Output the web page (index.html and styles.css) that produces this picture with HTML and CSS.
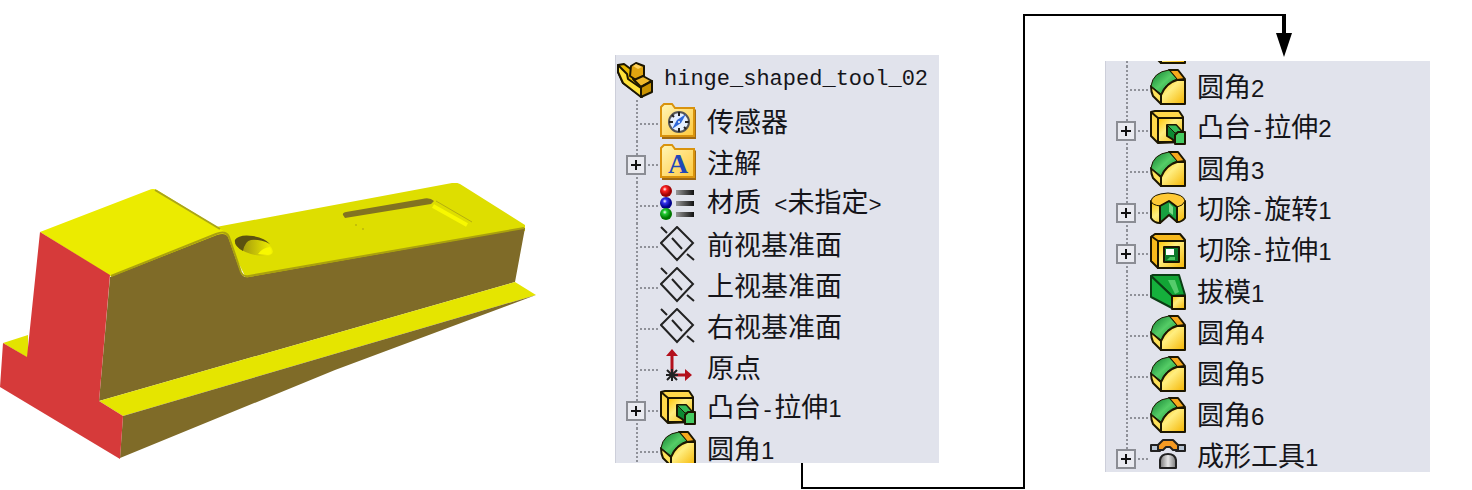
FILE: index.html
```html
<!DOCTYPE html>
<html lang="zh-CN">
<head>
    <meta charset="UTF-8">
    <meta name="viewport" content="width=device-width, initial-scale=1.0">
    <title>hinge_shaped_tool_02</title>
    <link rel="stylesheet" href="styles.css">
</head>
<body>

<svg class="defs" aria-hidden="true">
    <defs>
        <linearGradient id="gold" x1="0" y1="0" x2="1" y2="1">
            <stop offset="0" stop-color="#ffc400"/>
            <stop offset=".4" stop-color="#ffee80"/>
            <stop offset="1" stop-color="#f5b400"/>
        </linearGradient>
        <linearGradient id="leaf" x1="0" y1="0" x2="1" y2="1">
            <stop offset="0" stop-color="#0b7a2c"/>
            <stop offset=".5" stop-color="#55cc66"/>
            <stop offset="1" stop-color="#0d8a30"/>
        </linearGradient>
        <linearGradient id="folder" x1="0" y1="0" x2="1" y2="1">
            <stop offset="0" stop-color="#fff6b8"/>
            <stop offset="1" stop-color="#ffc93c"/>
        </linearGradient>
        <linearGradient id="steel">
            <stop offset="0" stop-color="#777"/>
            <stop offset=".5" stop-color="#e6e6e6"/>
            <stop offset="1" stop-color="#777"/>
        </linearGradient>
        <linearGradient id="bar">
            <stop offset="0" stop-color="#999"/>
            <stop offset="1" stop-color="#111"/>
        </linearGradient>
        <radialGradient id="red" cx=".4" cy=".35"><stop offset="0" stop-color="#fff"/><stop offset=".35" stop-color="#f22"/><stop offset="1" stop-color="#900"/></radialGradient>
        <radialGradient id="blue" cx=".4" cy=".35"><stop offset="0" stop-color="#fff"/><stop offset=".35" stop-color="#33e"/><stop offset="1" stop-color="#008"/></radialGradient>
        <radialGradient id="green" cx=".4" cy=".35"><stop offset="0" stop-color="#fff"/><stop offset=".35" stop-color="#2c3"/><stop offset="1" stop-color="#070"/></radialGradient>
    </defs>

    <symbol id="i-part" viewBox="0 0 36 36">
        <g stroke="#1c1600" stroke-width="2" stroke-linejoin="round">
            <path fill="#e8b800" d="M1 3l6-1 8 6 1 9 9 7v11L6 21 1 10z"/>
            <path fill="#ffe23a" d="M1 3l9 9 1 5 13 9v9L6 21 1 10z"/>
            <path fill="#e0a410" d="M14 4l5-3 8 3v10l-8 4-6-4z"/>
            <path fill="#f0b92a" d="M17 18l9-4 9 5-11 6z"/>
            <path fill="#c99200" d="M24 25l11-6v11l-11 5z"/>
        </g>
        <path fill="#ffd25e" d="M16 4l3-2 6 3-4 2z"/>
    </symbol>

    <symbol id="i-sensor" viewBox="0 0 36 36">
        <path d="M2 36V5h32l2 2v29z" fill="#a06a14"/>
        <path d="M1 33V4l3-3h8l3 4h19v28z" fill="url(#folder)" stroke="#d9930d" stroke-width="2"/>
        <circle cx="19" cy="19" r="10" fill="#e4efff" stroke="#555" stroke-width="2"/>
        <path d="M19 9v4M19 25v4M9 19h4M25 19h4M12 12l2 2M24 24l2 2" stroke="#222" stroke-width="2"/>
        <path d="M12 26l5-9 9-6-5 9z" fill="#2d67d8"/>
        <circle cx="19" cy="19" r="1" fill="#fff"/>
    </symbol>

    <symbol id="i-note" viewBox="0 0 36 36">
        <path d="M2 36V5h32l2 2v29z" fill="#a06a14"/>
        <path d="M1 33V4l3-3h8l3 4h19v28z" fill="url(#folder)" stroke="#d9930d" stroke-width="2"/>
    </symbol>

    <symbol id="i-material" viewBox="0 0 36 36">
        <circle cx="6" cy="6" r="6" fill="url(#red)"/>
        <circle cx="6" cy="18" r="6" fill="url(#blue)"/>
        <circle cx="6" cy="29" r="6" fill="url(#green)"/>
        <path fill="url(#bar)" d="M16 5h18v5H16zM16 16h18v5H16zM16 27h18v5H16z"/>
    </symbol>

    <symbol id="i-plane" viewBox="0 0 36 36">
        <g fill="none" stroke="#222" stroke-width="2">
            <path d="M17 1l16 16-16 17L1 17z"/>
            <path d="M1 1l6 6M12 12l10 11M27 28l7 6"/>
        </g>
    </symbol>

    <symbol id="i-origin" viewBox="0 0 36 36">
        <path d="M12 24V6M14 26h12" stroke="#b3101c" stroke-width="3"/>
        <path d="M6 7l6-7 6 7zM25 20l7 6-7 6z" fill="#b3101c"/>
        <path d="M12 20v12M6 26h12M7 21l10 10M17 21L7 31" stroke="#222" stroke-width="2"/>
    </symbol>

    <symbol id="i-boss" viewBox="0 0 36 36">
        <g stroke="#1c1600" stroke-width="2" stroke-linejoin="round">
            <path fill="#ffd84a" d="M1 2l4-1h24l4 6v25l-25 1-7-7z"/>
            <path fill="url(#gold)" d="M8 8h25v24H8z"/>
            <path fill="none" d="M1 2l7 6"/>
            <path fill="#0c8a32" d="M17 15h9l8 9-8 9-4-4-5-3z"/>
            <path fill="#35bb56" stroke-width="1" d="M17 15h9l7 8h-8z"/>
            <path fill="#45cc62" d="M25 25l3-3h7v12H25z"/>
        </g>
    </symbol>

    <symbol id="i-fillet" viewBox="0 0 36 36">
        <g stroke="#1c1600" stroke-width="2" stroke-linejoin="round">
            <path fill="#f7a91c" d="M19 1h9l7 9-8 1z"/>
            <path fill="#ffe25a" d="M1 17l10 9v9L3 27q-2-4-2-10z"/>
            <path fill="url(#gold)" d="M11 35V26q5-12 16-15h8v24z"/>
            <path fill="url(#leaf)" stroke-width="1" d="M1 17Q3 3 19 1l8 9q-12 4-16 15z"/>
        </g>
    </symbol>

    <symbol id="i-revolve" viewBox="0 0 36 36">
        <g stroke="#1c1600" stroke-width="2" stroke-linejoin="round">
            <path fill="url(#gold)" d="M1 9v17q3 5 9 5V13zM35 9v17q-3 4-8 4V14z"/>
            <path fill="#ffc935" stroke-width="1" d="M1 9q1-7 17-8 16 1 17 8-2 5-8 6L19 9l-9 5Q2 13 1 9z"/>
            <path fill="#18a040" d="M10 14l9-5 8 6v15l-8-7-9 8z"/>
            <path fill="#7ddb88" stroke="none" d="M19 11l4 4v8l-4-3z"/>
        </g>
    </symbol>

    <symbol id="i-cut" viewBox="0 0 36 36">
        <g stroke="#1c1600" stroke-width="2" stroke-linejoin="round">
            <path fill="#f7b91c" d="M1 4l4-3h25l5 6v28H8l-7-7z"/>
            <path fill="url(#gold)" d="M8 8h27v27H8z"/>
            <path fill="none" d="M1 3l7 5"/>
            <path fill="#0c7a2c" d="M14 14h15v15H14z"/>
            <path fill="#fff" stroke="none" d="M16 16h8v6h-8z"/>
            <path fill="#4bc862" stroke="none" d="M17 27l3-3h5v3z"/>
        </g>
    </symbol>

    <symbol id="i-draft" viewBox="0 0 36 36">
        <g stroke="#0b3d14" stroke-width="2" stroke-linejoin="round">
            <path fill="#12a535" d="M1 2l2-1h26l6 20-13 1z"/>
            <path fill="#15b03c" d="M1 2l21 20v12L1 23z"/>
            <path fill="#55cc6c" stroke="none" d="M18 6h7l4 12-4 2z"/>
            <path fill="url(#gold)" stroke="#1c1600" d="M22 22h13v13H22z"/>
        </g>
    </symbol>

    <symbol id="i-form" viewBox="0 0 36 36">
        <g stroke="#222" stroke-width="2" stroke-linejoin="round">
            <path fill="#b9c6d4" d="M1 7h9v6H1zM26 7h9v6h-9z"/>
            <path fill="#f59a23" d="M8 7l5-5h10l5 5v5h-5l-3-3h-4l-3 3H8z"/>
            <path fill="url(#steel)" d="M10 30v-8q1-6 8-6t8 6v8z"/>
        </g>
    </symbol>
</svg>

<main class="figure">

    <svg class="model" viewBox="0 183 537 277" role="img" aria-label="hinge_shaped_tool_02">
        <defs>
            <linearGradient id="hole"><stop offset="0" stop-color="#8f8410"/><stop offset="1" stop-color="#f4f400"/></linearGradient>
        </defs>
        <path fill="#e3e300" d="M3 343l25-8v23z"/>
        <path fill="#dede00" d="M216 227l236-44q4-1 8 1l65 41v6L246 278l-20-40z"/>
        <path fill="#ebeb00" d="M40 232l109-42q4-2 8 0l70 43L112 277z"/>
        <path fill="none" stroke="#a9a51a" stroke-width="2" d="M155 190l65 39"/>
        <path fill="#7f6b28" d="M110 277l107-42q8-3 11 2l13 36q2 5 8 4l276-49-10 54L99 401z"/>
        <path fill="none" stroke="#aaa10e" stroke-width="2" d="M111 276l105-42q10-4 13 3l12 35q2 5 8 4l275-48"/>
        <path fill="#e5e500" d="M99 401l416-119 21 13-413 121z"/>
        <path fill="#7f6b28" d="M123 416l413-121-201 75-215 88z"/>
        <path fill="#d63a3a" d="M40 232l70 43-11 126 24 15-3 43L0 387l3-44 24 14z"/>

        <!-- round hole -->
        <path fill="url(#hole)" d="M235 240q4-5 18-3 13 3 18 10 6 9-8 9-16-1-24-8-5-4-4-8z"/>
        <path fill="#5c5210" d="M235 240q4-6 18-4 12 2 17 8-10-5-19-4-6 1-8 11-9-5-8-11z"/>
        <path fill="#f8f800" d="M258 254q4-6 12-7 4 7-2 8z"/>

        <!-- rectangular pocket -->
        <path fill="#827321" d="M343 215q-1-2 3-3l76-13q8-2 12 2l-3 3-86 14z"/>
        <path fill="none" stroke="#b5af0e" stroke-width="1" d="M436 201l36 21"/>
        <path fill="none" stroke="#f8f800" stroke-width="4" d="M433 206l34 19"/>
        <path fill="none" stroke="#aaa30e" d="M355 225h2M362 229h2"/>
    </svg>

    <section class="panel panel-first">
        <h1 class="part">
            <svg class="icon"><use href="#i-part"/></svg>
            <span class="half">hinge_shaped_tool_02</span>
        </h1>
        <ul class="tree">
            <li><span class="branch"></span><svg class="icon"><use href="#i-sensor"/></svg><span>传感器</span></li>
            <li><span class="branch"><button type="button" aria-label="展开 注解"></button></span><svg class="icon"><use href="#i-note"/><text x="18" y="29" text-anchor="middle" class="note-letter">A</text></svg><span>注解</span></li>
            <li><span class="branch"></span><svg class="icon"><use href="#i-material"/></svg><span>材质<span class="half"> &lt;</span>未指定<span class="half">&gt;</span></span></li>
            <li><span class="branch"></span><svg class="icon"><use href="#i-plane"/></svg><span>前视基准面</span></li>
            <li><span class="branch"></span><svg class="icon"><use href="#i-plane"/></svg><span>上视基准面</span></li>
            <li><span class="branch"></span><svg class="icon"><use href="#i-plane"/></svg><span>右视基准面</span></li>
            <li><span class="branch"></span><svg class="icon"><use href="#i-origin"/></svg><span>原点</span></li>
            <li><span class="branch"><button type="button" aria-label="展开 凸台-拉伸1"></button></span><svg class="icon"><use href="#i-boss"/></svg><span>凸台<span class="half">-</span>拉伸<span class="num">1</span></span></li>
            <li><span class="branch"></span><svg class="icon"><use href="#i-fillet"/></svg><span>圆角<span class="num">1</span></span></li>
        </ul>
    </section>

    <section class="panel panel-second">
        <ul class="tree">
            <!-- row scrolled out above the panel -->
            <li aria-hidden="true"><span class="branch"></span><svg class="icon"><use href="#i-fillet"/></svg></li>
            <li><span class="branch"></span><svg class="icon"><use href="#i-fillet"/></svg><span>圆角<span class="num">2</span></span></li>
            <li><span class="branch"><button type="button" aria-label="展开 凸台-拉伸2"></button></span><svg class="icon"><use href="#i-boss"/></svg><span>凸台<span class="half">-</span>拉伸<span class="num">2</span></span></li>
            <li><span class="branch"></span><svg class="icon"><use href="#i-fillet"/></svg><span>圆角<span class="num">3</span></span></li>
            <li><span class="branch"><button type="button" aria-label="展开 切除-旋转1"></button></span><svg class="icon"><use href="#i-revolve"/></svg><span>切除<span class="half">-</span>旋转<span class="num">1</span></span></li>
            <li><span class="branch"><button type="button" aria-label="展开 切除-拉伸1"></button></span><svg class="icon"><use href="#i-cut"/></svg><span>切除<span class="half">-</span>拉伸<span class="num">1</span></span></li>
            <li><span class="branch"></span><svg class="icon"><use href="#i-draft"/></svg><span>拔模<span class="num">1</span></span></li>
            <li><span class="branch"></span><svg class="icon"><use href="#i-fillet"/></svg><span>圆角<span class="num">4</span></span></li>
            <li><span class="branch"></span><svg class="icon"><use href="#i-fillet"/></svg><span>圆角<span class="num">5</span></span></li>
            <li><span class="branch"></span><svg class="icon"><use href="#i-fillet"/></svg><span>圆角<span class="num">6</span></span></li>
            <li class="last"><span class="branch"><button type="button" aria-label="展开 成形工具1"></button></span><svg class="icon"><use href="#i-form"/></svg><span>成形工具<span class="num">1</span></span></li>
        </ul>
    </section>

    <svg class="connector" viewBox="0 0 1472 490" preserveAspectRatio="xMidYMin meet" aria-hidden="true">
        <path fill="none" stroke="#000" stroke-width="2" d="M802 463v25h222V15h260"/>
        <path fill="none" stroke="#000" stroke-width="4" d="M1284 14v22"/>
        <path d="M1276 33h16l-8 24z"/>
    </svg>
</main>

</body>
</html>
```

FILE: styles.css
```css
*{
    margin:0;
    padding:0;
    box-sizing:border-box;
}

html{
    --bg:#ffffff;
    --panel:#e1e3ec;
    --edge:#cdcfda;
    --line:#8f9199;
    --text:#15151a;
}

body{
    background:var(--bg);
    color:var(--text);
    font-family:"Noto Sans CJK SC", sans-serif;
    font-size:27px;
    line-height:28px;
}

.defs{
    position:absolute;
    width:0;
    height:0;
}

.figure{
    position:relative;
    display:grid;
    grid-template-columns:537fr 78fr 324fr 166fr 325fr 42fr;
    align-items:start;
    min-height:100vh;
}

.model{
    grid-column:1;
    width:100%;
    margin-top:183px;
}

.panel{
    overflow:hidden;
    background:var(--panel);
    border-left:1px solid var(--edge);
    white-space:nowrap;
}

.panel-first{
    grid-column:3;
    margin-top:55px;
    padding-top:4px;
}

.panel-second{
    grid-column:5;
    margin-top:61px;
}

/* the lists run past the edges of their panels */
.panel-first .tree{ margin-bottom:-6px; }
.panel-second .tree{ margin:-36px 0 -4px; }

.part, .tree li{
    display:flex;
    align-items:center;
    height:41px;
    font-size:27px;
    font-weight:normal;
}

.part{ padding-left:1px; }
.tree{ list-style:none; }

.icon{
    flex:none;
    width:36px;
    height:36px;
    margin-right:11px;
}

.half{
    font-family:"Liberation Mono", monospace;
    font-size:22px;
    line-height:1;
    white-space:pre;
}

.num{
    font-family:"Liberation Sans", sans-serif;
    font-size:24px;
    line-height:1;
}

.branch{
    flex:none;
    display:flex;
    align-items:center;
    width:44px;
    height:41px;
    padding:6px 0 0 10px;
    background:
        repeating-linear-gradient(to bottom, var(--line) 0 2px, transparent 2px 4px) 20px 0 / 2px 100% no-repeat,
        repeating-linear-gradient(to right, var(--line) 0 2px, transparent 2px 4px) 24px 23px / 20px 2px no-repeat;
}

.last .branch{
    background-size:2px 16px, 20px 2px;
}

.branch button{
    width:20px;
    height:20px;
    border:2px solid #8b8d94;
    background:
        linear-gradient(#111, #111) center / 10px 2px no-repeat,
        linear-gradient(#111, #111) center / 2px 10px no-repeat,
        #e9eaf0;
    cursor:pointer;
}

.connector{
    position:absolute;
    top:0;
    left:0;
    width:100%;
    pointer-events:none;
}

.note-letter{
    font-family:"Liberation Serif", serif;
    font-size:28px;
    font-weight:bold;
    fill:#2148b8;
}
```
